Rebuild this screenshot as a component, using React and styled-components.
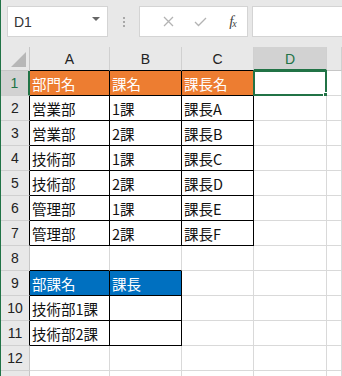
import styled, { createGlobalStyle } from "styled-components";

const GlobalStyle = createGlobalStyle`
  html, body {
    margin: 0;
    padding: 0;
    background: #ffffff;
  }
  * {
    box-sizing: border-box;
  }
`;

const GRID = "#d9d9d9";
const HEAD_LINE = "#c6c6c6";
const GREEN = "#217346";

// E is wider than the window, its letter sits out of view
const COLS = ["A", "B", "C", "D", "E"];
const HIDDEN_LABELS = ["E"];

// row number -> cells (A, B, C ...)
const DATA = {
  1: ["部門名", "課名", "課長名"],
  2: ["営業部", "1課", "課長A"],
  3: ["営業部", "2課", "課長B"],
  4: ["技術部", "1課", "課長C"],
  5: ["技術部", "2課", "課長D"],
  6: ["管理部", "1課", "課長E"],
  7: ["管理部", "2課", "課長F"],
  9: ["部課名", "課長"],
  10: ["技術部1課", ""],
  11: ["技術部2課", ""],
};

const FILLS = {
  1: "#ed7d31",
  9: "#0070c0",
};

function boxed(r, c) {
  if (r >= 1 && r <= 7 && c >= 0 && c <= 2) return true;
  if (r >= 9 && r <= 11 && c >= 0 && c <= 1) return true;
  return false;
}

const Page = styled.div`
  width: 342px;
  height: 376px;
  overflow: hidden;
  background: #e8e8e8;
  border-left: 1px solid ${GREEN};
`;

const Toolbar = styled.div`
  display: flex;
  align-items: flex-start;
  height: 47px;
  padding: 6px 0 0 6px;
`;

const NameBox = styled.div`
  width: 101px;
  height: 31px;
  background: #fff;
  border: 1px solid #d4d4d4;
  display: flex;
  align-items: center;
  justify-content: space-between;
  padding: 0 7px 0 6px;
  font-family: "Liberation Sans", Arial, sans-serif;
  font-size: 14px;
  color: #333;
`;

const Caret = styled.span`
  width: 0;
  height: 0;
  border-left: 4px solid transparent;
  border-right: 4px solid transparent;
  border-top: 4px solid #666;
  margin-top: -6px;
`;

const Grip = styled.div`
  width: 31px;
  height: 31px;
  display: flex;
  flex-direction: column;
  align-items: center;
  justify-content: center;
  gap: 2px;
  span {
    width: 2px;
    height: 2px;
    background: #a8a8a8;
  }
`;

const ButtonBox = styled.div`
  width: 109px;
  height: 31px;
  background: #fff;
  border: 1px solid #d4d4d4;
  display: flex;
  align-items: center;
  padding-left: 14px;
`;

const IconSlot = styled.div`
  width: ${(p) => p.$w}px;
  display: flex;
  align-items: center;
  justify-content: center;
`;

const Fx = styled.span`
  font-family: "Liberation Serif", "Times New Roman", serif;
  font-style: italic;
  font-size: 15px;
  color: #444;
  letter-spacing: -1px;
  sub {
    font-size: 10px;
    vertical-align: -1px;
  }
`;

const FormulaInput = styled.div`
  flex: 1;
  height: 31px;
  margin-left: 4px;
  background: #fff;
  border: 1px solid #d4d4d4;
  border-right: none;
`;

const Sheet = styled.div`
  display: grid;
  grid-template-columns: 29px 80px 72px 72px 73px 1fr;
  grid-template-rows: 24px;
  grid-auto-rows: 25px;
  background: #fff;
`;

const Corner = styled.div`
  background: #e8e8e8;
  border-right: 1px solid ${HEAD_LINE};
  border-bottom: 1px solid ${HEAD_LINE};
  display: flex;
  align-items: flex-end;
  justify-content: flex-end;
  padding: 0 3px 3px 0;
`;

const Triangle = styled.div`
  width: 0;
  height: 0;
  border-left: 15px solid transparent;
  border-bottom: 15px solid #b7b7b7;
`;

const ColHead = styled.div`
  background: ${(p) => (p.$active ? "#d2d2d2" : "#e8e8e8")};
  border-right: 1px solid #d0d0d0;
  border-bottom: ${(p) => (p.$active ? `2px solid ${GREEN}` : `1px solid ${p.$line}`)};
  display: flex;
  align-items: center;
  justify-content: center;
  font-family: "Liberation Sans", Arial, sans-serif;
  font-size: 14px;
  color: ${(p) => (p.$active ? GREEN : "#222")};
  padding-top: 1px;
`;

const RowHead = styled.div`
  background: ${(p) => (p.$active ? "#d2d2d2" : "#e8e8e8")};
  border-bottom: 1px solid #d0d0d0;
  border-right: ${(p) => (p.$active ? `2px solid ${GREEN}` : `1px solid ${p.$line}`)};
  display: flex;
  align-items: center;
  justify-content: center;
  font-family: "Liberation Sans", Arial, sans-serif;
  font-size: 14px;
  color: ${(p) => (p.$active ? GREEN : "#222")};
`;

const Cell = styled.div`
  position: relative;
  background: ${(p) => p.$bg || "#fff"};
  color: ${(p) => (p.$bg ? "#fff" : "#111")};
  border-right: 1px solid ${(p) => p.$right};
  border-bottom: 1px solid ${(p) => p.$bottom};
  display: flex;
  align-items: center;
  padding-left: 2px;
  font-family: "Noto Sans CJK JP", "Noto Sans", sans-serif;
  font-size: 14.5px;
  white-space: nowrap;
`;

const Selection = styled.div`
  position: absolute;
  top: -1px;
  left: -1px;
  right: -1px;
  bottom: -1px;
  border: 2px solid ${GREEN};
  pointer-events: none;
`;

const Handle = styled.div`
  position: absolute;
  right: -5px;
  bottom: -5px;
  width: 7px;
  height: 7px;
  background: ${GREEN};
  border: 1px solid #fff;
`;

// 12 labelled rows plus the sliver of row 13 at the window's bottom edge
const ROWS = Array.from({ length: 13 }, (_, i) => i + 1);
const LAST_VISIBLE = 12;

function Toolbars() {
  return (
    <Toolbar>
      <NameBox>
        D1
        <Caret />
      </NameBox>
      <Grip>
        <span />
        <span />
        <span />
      </Grip>
      <ButtonBox>
        <IconSlot $w={30}>
          <svg width="11" height="11" viewBox="0 0 11 11">
            <path d="M1 1 L10 10 M10 1 L1 10" stroke="#b3b3b3" strokeWidth="1.3" fill="none" />
          </svg>
        </IconSlot>
        <IconSlot $w={36}>
          <svg width="13" height="10" viewBox="0 0 13 10">
            <path d="M1 5 L4.5 8.5 L12 1" stroke="#b3b3b3" strokeWidth="1.3" fill="none" />
          </svg>
        </IconSlot>
        <IconSlot $w={30}>
          <Fx>
            f<sub>x</sub>
          </Fx>
        </IconSlot>
      </ButtonBox>
      <FormulaInput />
    </Toolbar>
  );
}

function RowGroup({ r }) {
  const values = DATA[r] || [];
  return (
    <>
      <RowHead $active={r === 1} $line={boxed(r, 0) ? "#000" : HEAD_LINE}>
        {r <= LAST_VISIBLE ? r : ""}
      </RowHead>
      {COLS.map((col, c) => {
        const inBox = boxed(r, c);
        const right = inBox || boxed(r, c + 1) ? "#000" : GRID;
        const bottom = inBox || boxed(r + 1, c) ? "#000" : GRID;
        const bg = inBox && FILLS[r] ? FILLS[r] : null;
        return (
          <Cell key={col} $right={right} $bottom={bottom} $bg={bg}>
            {values[c] || ""}
            {r === 1 && col === "D" && (
              <Selection>
                <Handle />
              </Selection>
            )}
          </Cell>
        );
      })}
    </>
  );
}

export default function App() {
  return (
    <>
      <GlobalStyle />
      <Page>
        <Toolbars />
        <Sheet>
          <Corner>
            <Triangle />
          </Corner>
          {COLS.map((col, c) => (
            <ColHead key={col} $active={col === "D"} $line={boxed(1, c) ? "#000" : HEAD_LINE}>
              {HIDDEN_LABELS.includes(col) ? "" : col}
            </ColHead>
          ))}
          {ROWS.map((r) => (
            <RowGroup key={r} r={r} />
          ))}
        </Sheet>
      </Page>
    </>
  );
}
